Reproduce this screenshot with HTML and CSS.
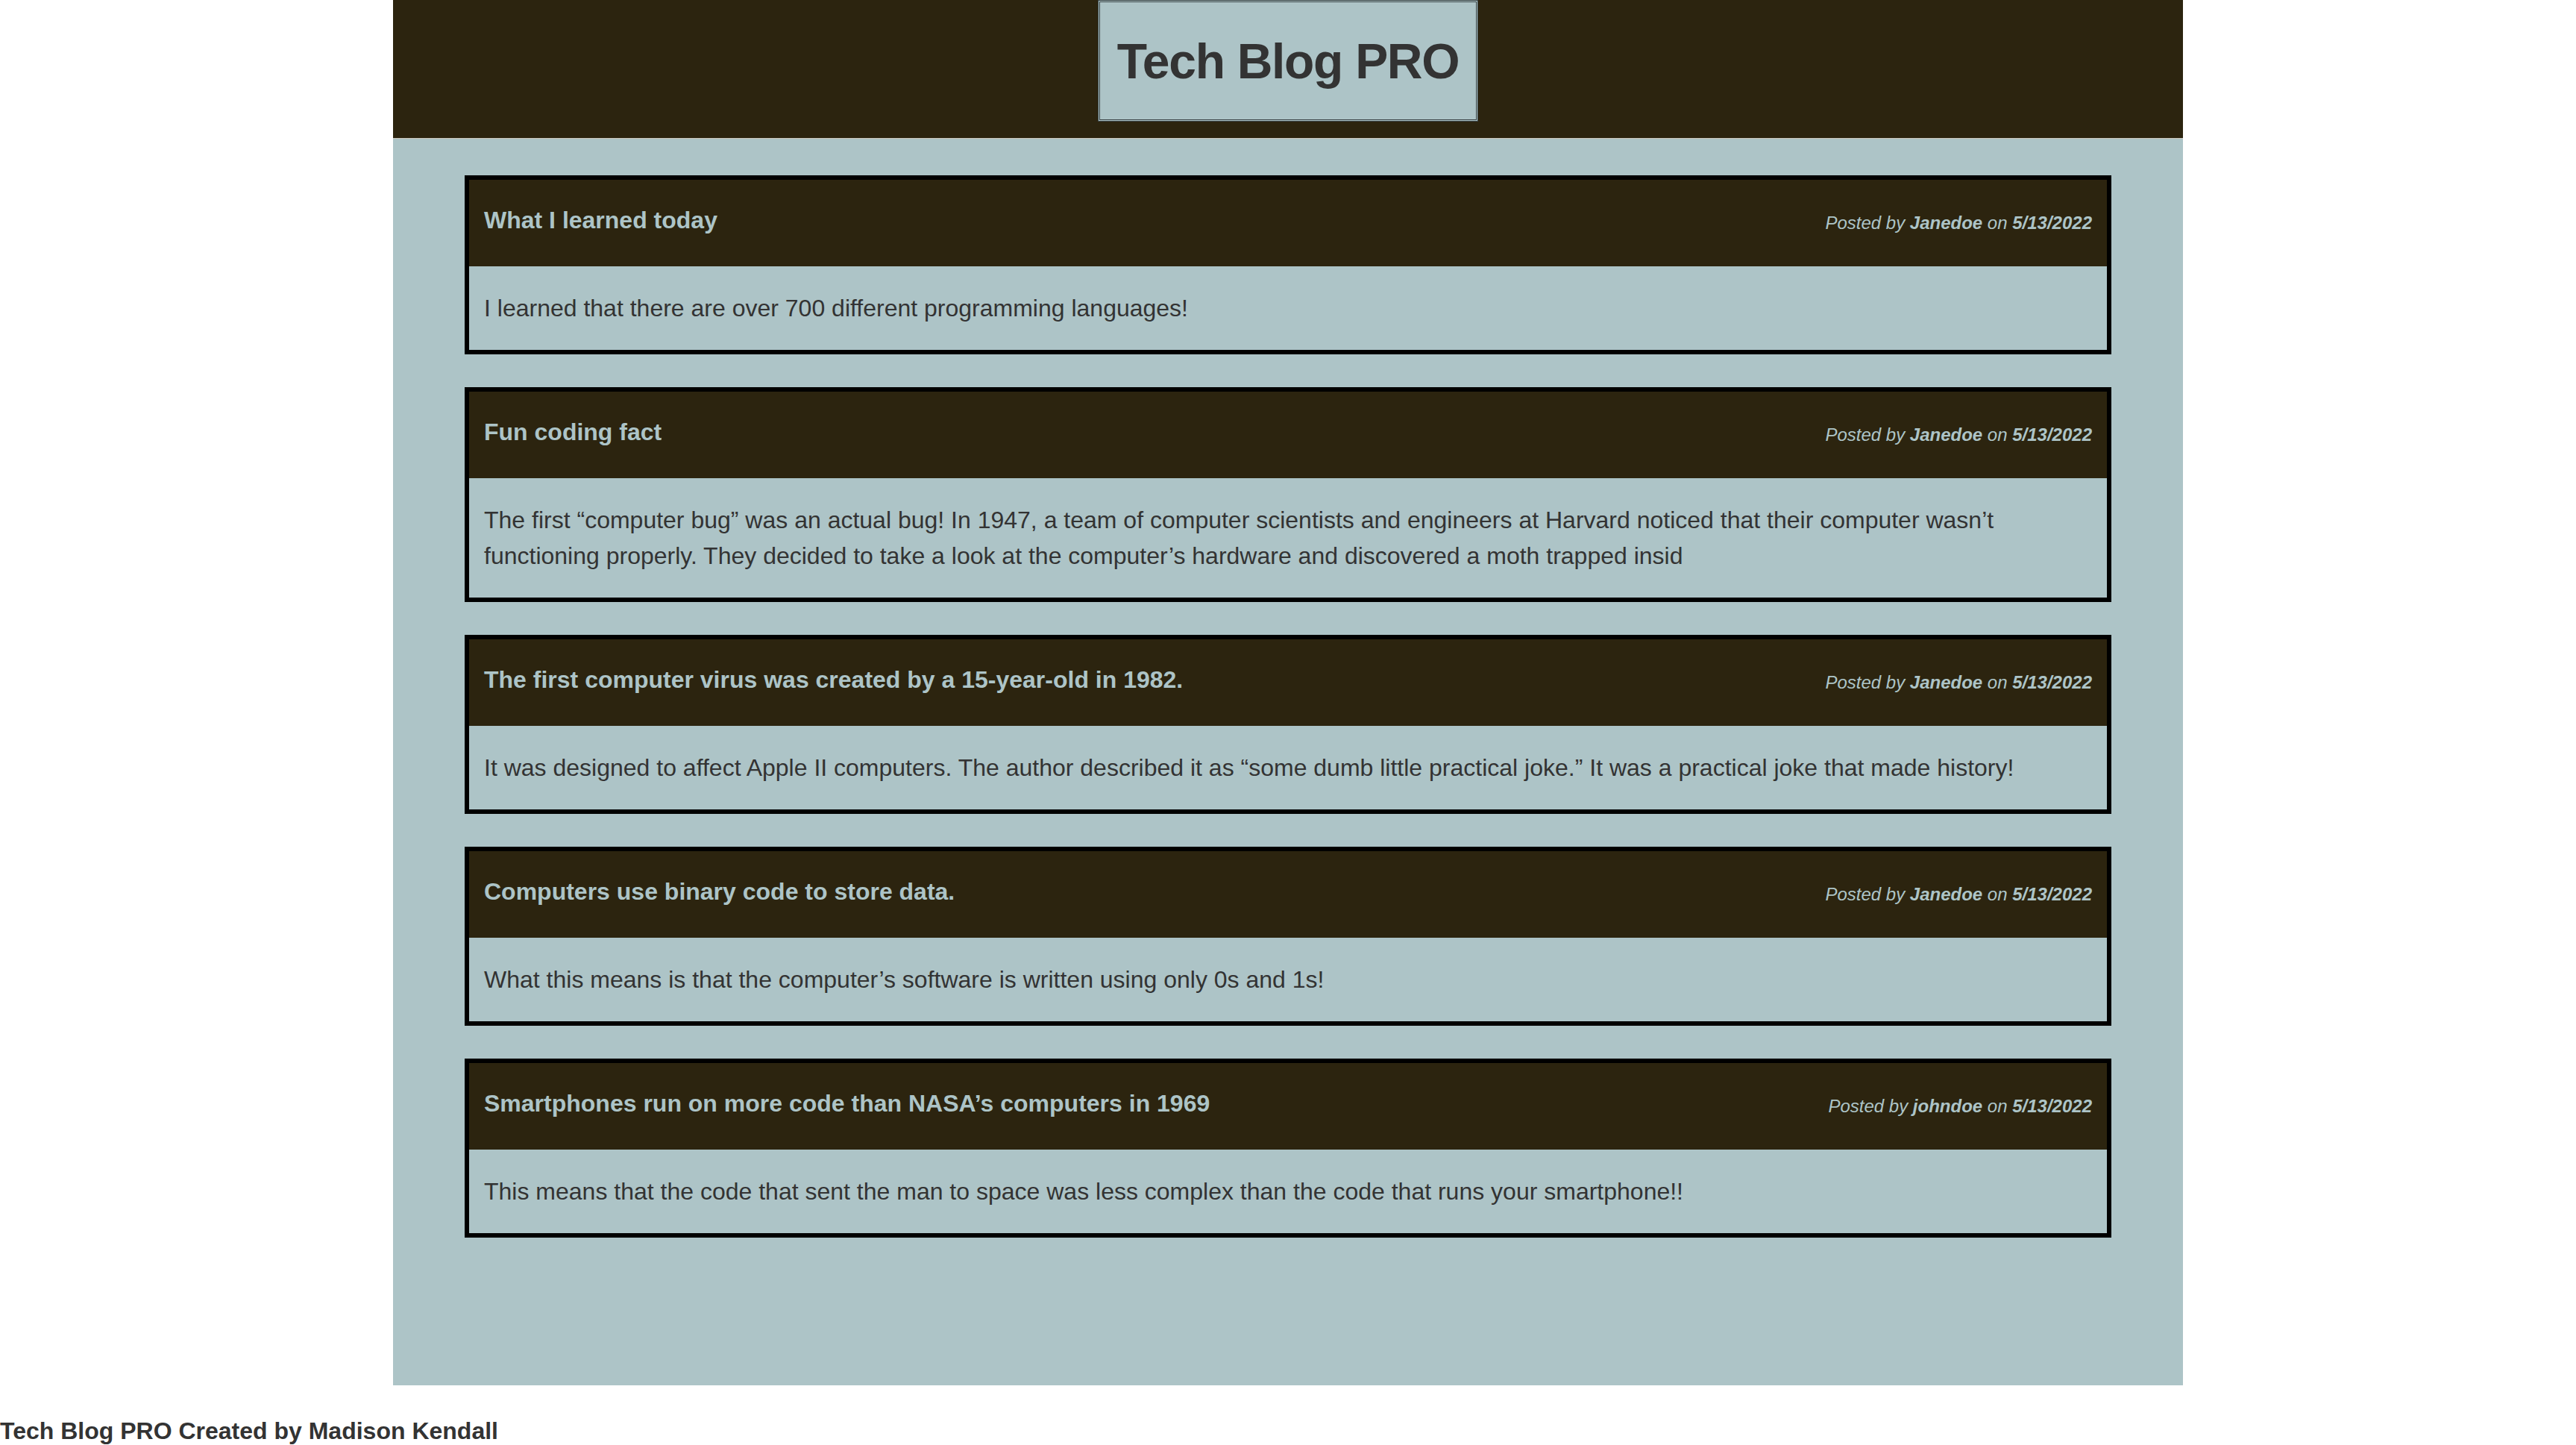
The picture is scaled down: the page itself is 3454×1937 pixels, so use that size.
FILE: index.html
```html
<!DOCTYPE html>
<html lang="en">
<head>
<meta charset="utf-8">
<title>Tech Blog PRO</title>
<link rel="stylesheet" href="styles.css">
</head>
<body>
<div class="page">
  <header class="site-header">
    <h1 class="brand">Tech Blog PRO</h1>
  </header>
  <main class="posts">
    <article class="post">
      <div class="post-head">
        <h2 class="post-title">What I learned today</h2>
        <p class="post-meta">Posted by <strong>Janedoe</strong> on <strong>5/13/2022</strong></p>
      </div>
      <p class="post-body">I learned that there are over 700 different programming languages!</p>
    </article>
    <article class="post">
      <div class="post-head">
        <h2 class="post-title">Fun coding fact</h2>
        <p class="post-meta">Posted by <strong>Janedoe</strong> on <strong>5/13/2022</strong></p>
      </div>
      <p class="post-body">The first “computer bug” was an actual bug! In 1947, a team of computer scientists and engineers at Harvard noticed that their computer wasn’t functioning properly. They decided to take a look at the computer’s hardware and discovered a moth trapped insid</p>
    </article>
    <article class="post">
      <div class="post-head">
        <h2 class="post-title">The first computer virus was created by a 15-year-old in 1982.</h2>
        <p class="post-meta">Posted by <strong>Janedoe</strong> on <strong>5/13/2022</strong></p>
      </div>
      <p class="post-body">It was designed to affect Apple II computers. The author described it as “some dumb little practical joke.” It was a practical joke that made history!</p>
    </article>
    <article class="post">
      <div class="post-head">
        <h2 class="post-title">Computers use binary code to store data.</h2>
        <p class="post-meta">Posted by <strong>Janedoe</strong> on <strong>5/13/2022</strong></p>
      </div>
      <p class="post-body">What this means is that the computer’s software is written using only 0s and 1s!</p>
    </article>
    <article class="post">
      <div class="post-head">
        <h2 class="post-title">Smartphones run on more code than NASA’s computers in 1969</h2>
        <p class="post-meta">Posted by <strong>johndoe</strong> on <strong>5/13/2022</strong></p>
      </div>
      <p class="post-body">This means that the code that sent the man to space was less complex than the code that runs your smartphone!!</p>
    </article>
  </main>
</div>
<footer class="site-footer">Tech Blog PRO Created by Madison Kendall</footer>
</body>
</html>
```
FILE: styles.css
```css
html, body {
  margin: 0;
  padding: 0;
}
body {
  background: #ffffff;
  font-family: "Liberation Sans", Arial, Helvetica, sans-serif;
  color: #333333;
}
.page {
  width: 2400px;
  margin: 0 auto;
  background: #adc4c7;
}
.site-header {
  height: 185px;
  background: #2c240f;
  border-bottom: 1px solid #cfcbc0;
  display: flex;
  justify-content: center;
  align-items: flex-start;
}
.brand {
  margin: 0;
  height: 157px;
  padding: 0 23px;
  display: flex;
  align-items: center;
  background: #adc4c7;
  border: 3px double #3a4446;
  font-size: 66px;
  letter-spacing: -1.3px;
  font-weight: bold;
  color: #333333;
}
.posts {
  padding: 49px 96px 198px;
  display: flex;
  flex-direction: column;
  gap: 44px;
}
.post {
  border: 6px solid #000000;
  background: #adc4c7;
}
.post-head {
  height: 116px;
  box-sizing: border-box;
  padding: 0 20px;
  background: #2c240f;
  color: #adc4c7;
  display: flex;
  align-items: center;
  justify-content: space-between;
}
.post-title {
  margin: 0 0 8px;
  font-size: 32px;
  font-weight: bold;
  line-height: 48px;
}
.post-meta {
  margin: 0;
  font-size: 24px;
  font-style: italic;
}
.post-meta strong {
  font-weight: bold;
}
.post-body {
  margin: 0;
  padding: 32px 20px;
  font-size: 32px;
  line-height: 48px;
  color: #333333;
}
.site-footer {
  margin-top: 43px;
  font-size: 32px;
  font-weight: bold;
  color: #333333;
}
```
